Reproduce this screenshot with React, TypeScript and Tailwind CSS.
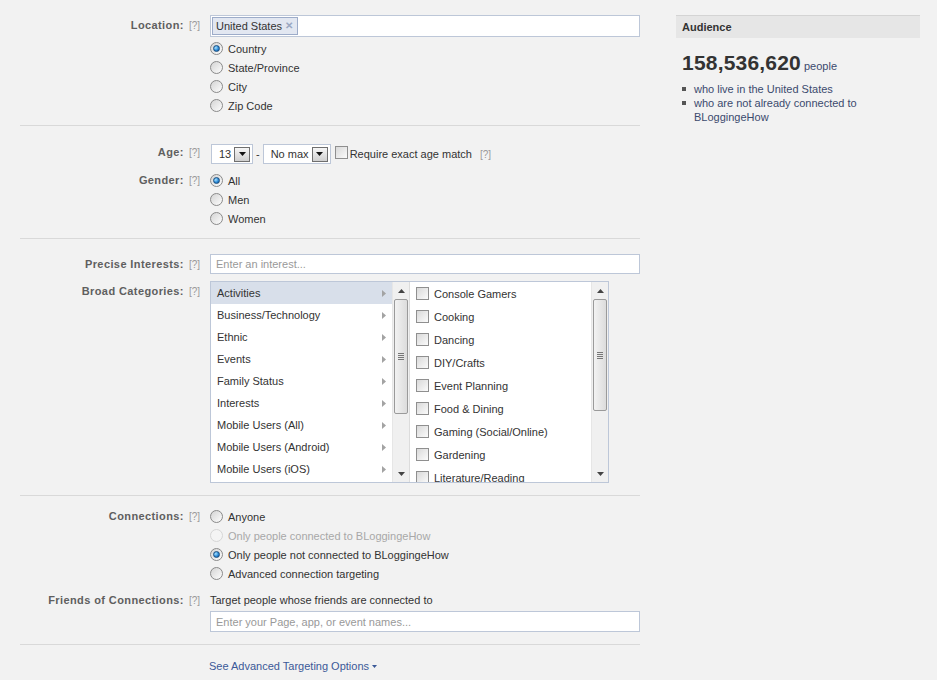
import type { ReactNode } from "react";

const font = "font-['Liberation_Sans',Arial,sans-serif]";

function Help() {
  return <span className="ml-[5px] text-[10px] font-normal tracking-normal text-[#999]">[?]</span>;
}

function Radio({ checked, disabled }: { checked?: boolean; disabled?: boolean }) {
  return (
    <span
      className={[
        "inline-flex size-[13px] shrink-0 items-center justify-center rounded-full border",
        disabled
          ? "border-[#d6d6d6] bg-[#f4f4f4]"
          : "border-[#8a8a8a] bg-[linear-gradient(135deg,#d4d4d4,#fdfdfd)]",
      ].join(" ")}
    >
      {checked && (
        <span className="size-[7px] rounded-full border border-[#1b4f80] bg-[radial-gradient(circle_at_35%_35%,#a9e2ff,#2a8ad8_55%,#0f4a86)]" />
      )}
    </span>
  );
}

function Check() {
  return (
    <span className="inline-block size-[13px] shrink-0 border border-[#8f8f8f] bg-[linear-gradient(135deg,#d9d9d9,#fbfbfb)]" />
  );
}

function RadioRow({
  label,
  checked,
  disabled,
}: {
  label: string;
  checked?: boolean;
  disabled?: boolean;
}) {
  return (
    <div className="flex h-[19px] items-center gap-[5px]">
      <Radio checked={checked} disabled={disabled} />
      <span className={disabled ? "text-[#a8a8a8]" : "text-[#333]"}>{label}</span>
    </div>
  );
}

function Row({ label, children, top = "pt-[4px]" }: { label: string; children: ReactNode; top?: string }) {
  return (
    <div className="flex">
      <div className={`w-[180px] shrink-0 text-right font-bold tracking-[0.4px] text-[#5f5f5f] ${top}`}>
        {label}
        <Help />
      </div>
      <div className="ml-[10px] flex-1">{children}</div>
    </div>
  );
}

function DropButton() {
  return (
    <span className="flex h-[15px] w-[16px] items-center justify-center border border-[#6f6f6f] bg-[linear-gradient(#f6f6f6,#cfcfcf)]">
      <svg width="7" height="4" viewBox="0 0 7 4">
        <path d="M0 0h7L3.5 4z" fill="#111" />
      </svg>
    </span>
  );
}

function Select({ value, width }: { value: string; width: string }) {
  return (
    <div className={`flex h-[20px] items-center justify-between border border-[#bdc7d8] bg-white pl-[7px] pr-[2px] ${width}`}>
      <span className="text-[#333]">{value}</span>
      <DropButton />
    </div>
  );
}

function Scrollbar({ thumbH }: { thumbH: string }) {
  return (
    <div className="flex w-[17px] shrink-0 flex-col border-l border-[#e6e6e6] bg-[#f0f0f0]">
      <div className="flex h-[17px] items-center justify-center">
        <svg width="7" height="4" viewBox="0 0 7 4">
          <path d="M3.5 0L7 4H0z" fill="#444" />
        </svg>
      </div>
      <div className={`mx-[1px] flex items-center justify-center rounded-[2px] border border-[#9a9a9a] bg-[linear-gradient(90deg,#f2f2f2,#dcdcdc)] ${thumbH}`}>
        <div className="flex flex-col gap-[1px]">
          <span className="block h-px w-[6px] bg-[#777]" />
          <span className="block h-px w-[6px] bg-[#777]" />
          <span className="block h-px w-[6px] bg-[#777]" />
          <span className="block h-px w-[6px] bg-[#777]" />
        </div>
      </div>
      <div className="flex-1" />
      <div className="flex h-[17px] items-center justify-center">
        <svg width="7" height="4" viewBox="0 0 7 4">
          <path d="M0 0h7L3.5 4z" fill="#444" />
        </svg>
      </div>
    </div>
  );
}

const categories = [
  "Activities",
  "Business/Technology",
  "Ethnic",
  "Events",
  "Family Status",
  "Interests",
  "Mobile Users (All)",
  "Mobile Users (Android)",
  "Mobile Users (iOS)",
];

const activities = [
  "Console Gamers",
  "Cooking",
  "Dancing",
  "DIY/Crafts",
  "Event Planning",
  "Food & Dining",
  "Gaming (Social/Online)",
  "Gardening",
  "Literature/Reading",
];

function Section({ children, className }: { children: ReactNode; className: string }) {
  return <div className={`border-b border-[#d9d9d9] ${className}`}>{children}</div>;
}

export default function App() {
  return (
    <div className={`flex h-[680px] w-[937px] overflow-hidden bg-[#f2f2f2] text-[11px] leading-[14px] text-[#333] ${font}`}>
      {/* form column */}
      <div className="ml-[20px] w-[620px] shrink-0">
        <Section className="pt-[15px] pb-[10px]">
          <Row label="Location:" top="pt-[3px]">
            <div className="flex h-[22px] items-center border border-[#bdc7d8] bg-white px-[1px]">
              <span className="flex h-[18px] items-center gap-[3px] border border-[#9dacc9] bg-[#e2e7f1] pl-[3px] pr-[4px] text-[#333]">
                United States
                <span className="text-[10px] font-bold text-[#9aa7c2]">✕</span>
              </span>
            </div>
            <div className="mt-[2px]">
              <RadioRow label="Country" checked />
              <RadioRow label="State/Province" />
              <RadioRow label="City" />
              <RadioRow label="Zip Code" />
            </div>
          </Row>
        </Section>

        <Section className="pt-[18px] pb-[10px]">
          <Row label="Age:" top="pt-[1px]">
            <div className="flex items-center">
              <span className="ml-px" />
              <Select value="13" width="w-[42px]" />
              <span className="mx-[3px] text-[#333]">-</span>
              <Select value="No max" width="w-[68px]" />
              <span className="ml-[4px]">
                <Check />
              </span>
              <span className="ml-[2px] text-[#333]">Require exact age match</span>
              <span className="ml-[3px]">
                <Help />
              </span>
            </div>
          </Row>
          <div className="mt-[7px]">
            <Row label="Gender:" top="pt-[2px]">
              <RadioRow label="All" checked />
              <RadioRow label="Men" />
              <RadioRow label="Women" />
            </Row>
          </div>
        </Section>

        <Section className="pt-[15px] pb-[12px]">
          <Row label="Precise Interests:" top="pt-[3px]">
            <div className="flex h-[20px] items-center border border-[#bdc7d8] bg-white px-[5px] text-[#999]">
              Enter an interest...
            </div>
          </Row>
          <div className="mt-[7px]">
            <Row label="Broad Categories:" top="pt-[3px]">
              <div className="flex h-[202px] w-[399px] border border-[#bdc7d8] bg-white">
                <div className="flex flex-1 flex-col overflow-hidden">
                  {categories.map((c, i) => (
                    <div
                      key={c}
                      className={`flex h-[22px] shrink-0 items-center justify-between pl-[6px] pr-[6px] ${i === 0 ? "bg-[#d8dfea]" : ""}`}
                    >
                      <span className="text-[#333]">{c}</span>
                      <svg width="4" height="7" viewBox="0 0 4 7">
                        <path d="M0 0l4 3.5L0 7z" fill="#a3a3a3" />
                      </svg>
                    </div>
                  ))}
                </div>
                <Scrollbar thumbH="h-[115px]" />
                <div className="flex w-[182px] shrink-0 flex-col overflow-hidden border-l border-[#dcdcdc]">
                  {activities.map((a) => (
                    <div key={a} className="flex h-[23px] shrink-0 items-center gap-[5px] pl-[6px]">
                      <Check />
                      <span className="text-[#333]">{a}</span>
                    </div>
                  ))}
                </div>
                <Scrollbar thumbH="h-[112px]" />
              </div>
            </Row>
          </div>
        </Section>

        <Section className="pt-[11px] pb-[12px]">
          <Row label="Connections:" top="pt-[2px]">
            <RadioRow label="Anyone" />
            <RadioRow label="Only people connected to BLoggingeHow" disabled />
            <RadioRow label="Only people not connected to BLoggingeHow" checked />
            <RadioRow label="Advanced connection targeting" />
          </Row>
          <div className="mt-[8px]">
            <Row label="Friends of Connections:" top="pt-[2px]">
              <div className="flex h-[18px] items-center text-[#333]">Target people whose friends are connected to</div>
              <div className="mt-[2px] flex h-[21px] items-center border border-[#bdc7d8] bg-white px-[5px] text-[#999]">
                Enter your Page, app, or event names...
              </div>
            </Row>
          </div>
        </Section>

        <div className="flex pt-[14px]">
          <div className="w-[180px] shrink-0" />
          <div className="ml-[9px] flex items-center gap-[3px] text-[#3b5998]">
            See Advanced Targeting Options
            <svg width="5" height="3" viewBox="0 0 5 3">
              <path d="M0 0h5L2.5 3z" fill="#3b5998" />
            </svg>
          </div>
        </div>
      </div>

      {/* audience column */}
      <div className="ml-[36px] w-[244px] shrink-0 pt-[15px]">
        <div className="flex h-[23px] items-center border-t border-[#d4d4d4] bg-[#e6e6e6] px-[6px] pb-px font-bold text-[#333]">
          Audience
        </div>
        <div className="mt-[12px] flex items-baseline px-[6px]">
          <span className="text-[21px] font-bold leading-[26px] tracking-[0.2px] text-[#333]">158,536,620</span>
          <span className="ml-[3px] text-[#3b4a6e]">people</span>
        </div>
        <ul className="mt-[6px] px-[6px] text-[#3b4a6e]">
          <li className="flex gap-[8px]">
            <span className="mt-[5px] size-[4px] shrink-0 bg-[#555]" />
            <span>who live in the United States</span>
          </li>
          <li className="flex gap-[8px]">
            <span className="mt-[5px] size-[4px] shrink-0 bg-[#555]" />
            <span>
              who are not already connected to
              <br />
              BLoggingeHow
            </span>
          </li>
        </ul>
      </div>
    </div>
  );
}
